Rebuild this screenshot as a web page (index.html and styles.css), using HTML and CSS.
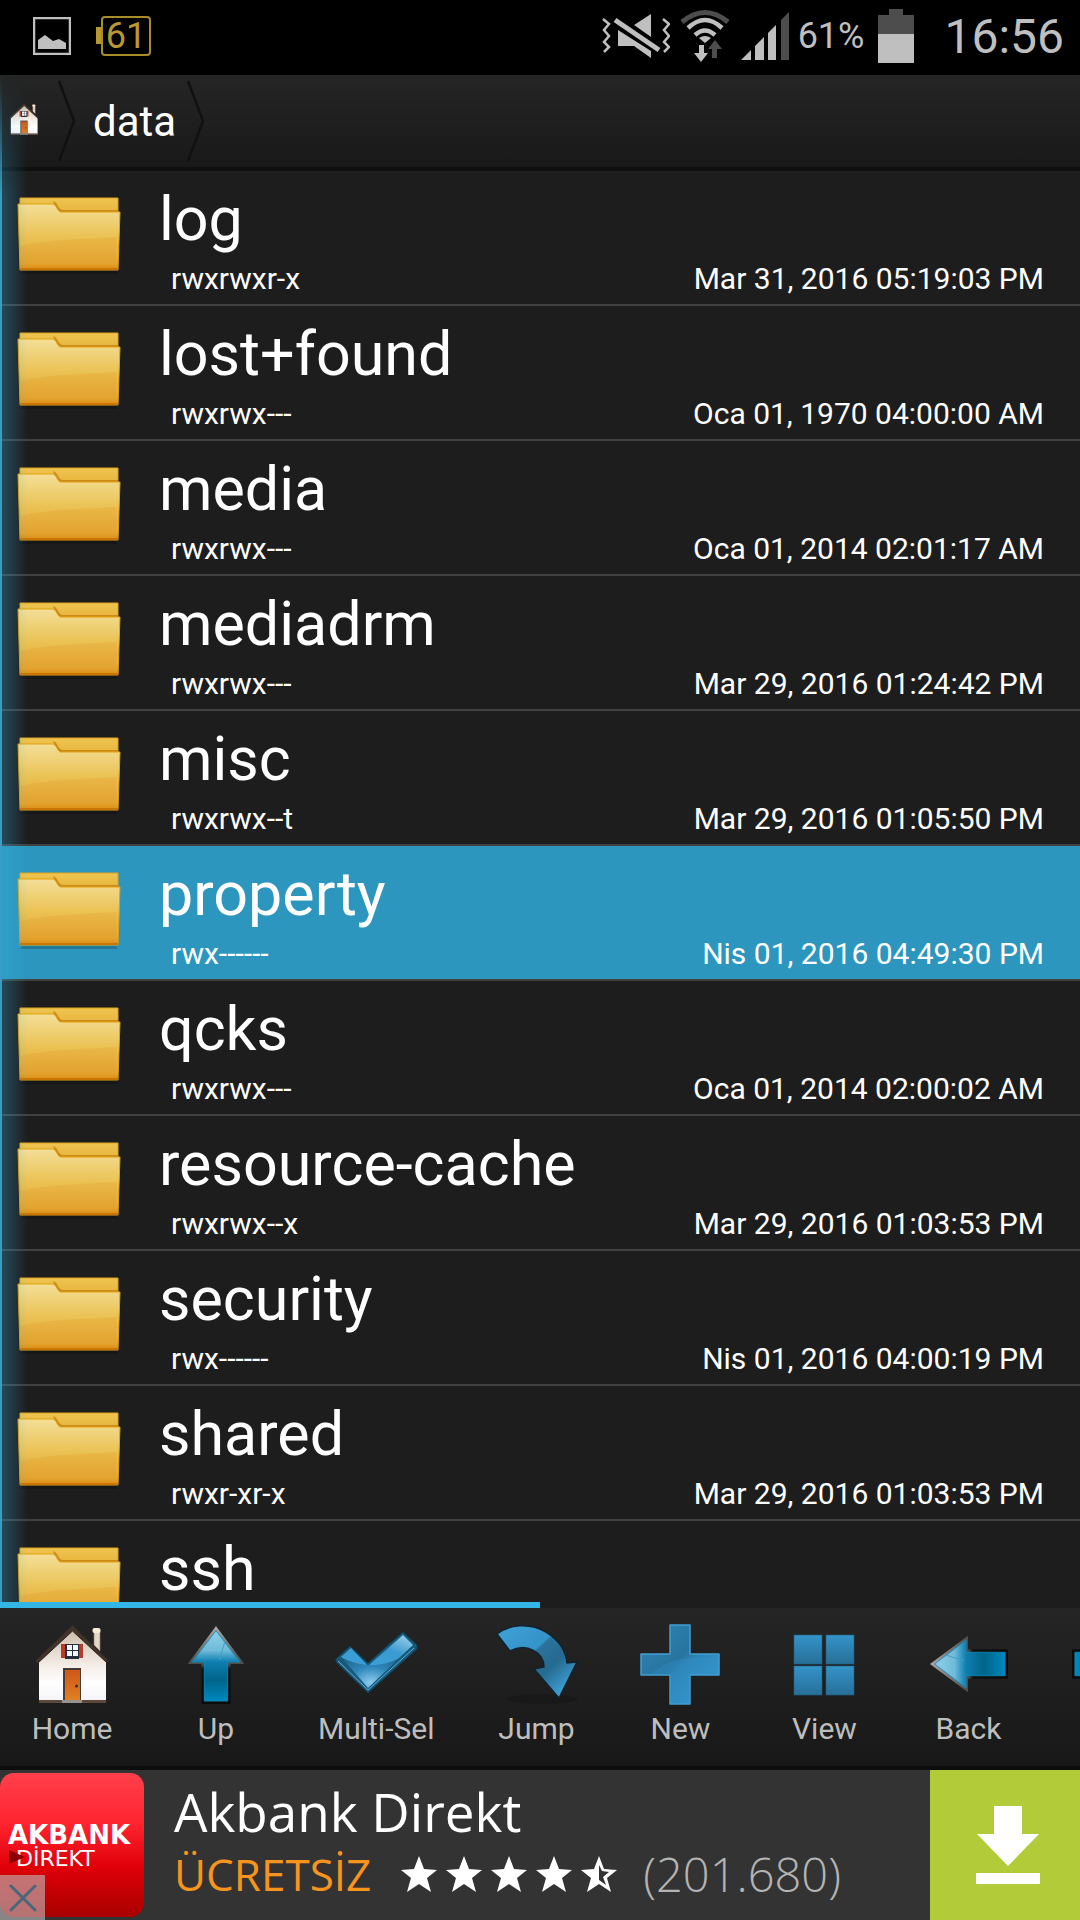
FILE: index.html
```html
<!DOCTYPE html>
<html lang="tr">
  <head>
    <meta charset="UTF-8" />
    <meta name="viewport" content="width=device-width, initial-scale=1.0" />
    <title>File Explorer - data</title>
    <link rel="stylesheet" href="styles.css">
  </head>
  <body>
    <!-- Shared icons -->
    <svg class="defs" width="0" height="0" aria-hidden="true">
      <defs>
        <linearGradient id="folder-front" x1="0" y1="0" x2="0" y2="1">
          <stop offset="0" stop-color="#f3df98" />
          <stop offset="0.5" stop-color="#ebc254" />
          <stop offset="0.9" stop-color="#e5a633" />
          <stop offset="1" stop-color="#d98a0c" />
        </linearGradient>
        <linearGradient id="folder-back" x1="0" y1="0" x2="0" y2="1">
          <stop offset="0" stop-color="#efc550" />
          <stop offset="1" stop-color="#d99a1c" />
        </linearGradient>
        <linearGradient id="wall" x1="0" y1="0" x2="0" y2="1">
          <stop offset="0" stop-color="#c9b8a4" />
          <stop offset="0.5" stop-color="#f3ece6" />
          <stop offset="0.75" stop-color="#ffffff" />
          <stop offset="1" stop-color="#f4f2f6" />
        </linearGradient>
        <linearGradient id="door" x1="0" y1="0" x2="0" y2="1">
          <stop offset="0" stop-color="#cf5718" />
          <stop offset="1" stop-color="#e07f24" />
        </linearGradient>
        <linearGradient id="rim" x1="0" y1="0" x2="0" y2="1">
          <stop offset="0" stop-color="#a8a8a8" />
          <stop offset="0.5" stop-color="#4a4a4a" />
          <stop offset="0.55" stop-color="#111111" />
          <stop offset="1" stop-color="#0c0c0c" />
        </linearGradient>
        <linearGradient id="arrow" x1="0" y1="0" x2="0" y2="1">
          <stop offset="0" stop-color="#8fd0e8" />
          <stop offset="0.28" stop-color="#6fbbd9" />
          <stop offset="0.44" stop-color="#0f7fb2" />
          <stop offset="0.7" stop-color="#006489" />
          <stop offset="1" stop-color="#0088c0" />
        </linearGradient>
        <linearGradient id="tile" x1="0" y1="0" x2="0" y2="1">
          <stop offset="0" stop-color="#3494c9" />
          <stop offset="1" stop-color="#276f98" />
        </linearGradient>
        <linearGradient id="plus" x1="0" y1="0" x2="1" y2="1">
          <stop offset="0" stop-color="#2f86b6" />
          <stop offset="0.45" stop-color="#28749f" />
          <stop offset="0.55" stop-color="#2d84b5" />
          <stop offset="1" stop-color="#3a9dd4" />
        </linearGradient>
        <linearGradient id="jump" x1="0" y1="0" x2="1" y2="1">
          <stop offset="0" stop-color="#3fa2d8" />
          <stop offset="0.4" stop-color="#3493c8" />
          <stop offset="0.42" stop-color="#2a739b" />
          <stop offset="0.62" stop-color="#256a90" />
          <stop offset="0.88" stop-color="#3fa2d8" />
        </linearGradient>
        <linearGradient id="check" x1="0" y1="1" x2="1" y2="0">
          <stop offset="0" stop-color="#3aa0d8" />
          <stop offset="0.6" stop-color="#3b9bd0" />
          <stop offset="1" stop-color="#a6d3ec" />
        </linearGradient>
        <radialGradient id="check-glow" cx="0.42" cy="0.9" r="0.6">
          <stop offset="0" stop-color="#8fcdf0" />
          <stop offset="0.5" stop-color="#2d86ba" />
          <stop offset="1" stop-color="#1e6288" />
        </radialGradient>
      </defs>
      <symbol id="icon-folder" viewBox="0 0 104 78">
        <path d="M5 74h94l2 3H3z" fill="#000" opacity="0.2" />
        <path d="M3 1h98v40H3z" fill="url(#folder-back)" stroke="#e0a21c" />
        <path d="M36 4c5 1 5 9 10 9h55v3H40z" fill="#bd7708" opacity="0.7" />
        <path d="M1 7h34c5 0 5 8 9 8h59l-2 58H3z" fill="url(#folder-front)" stroke="#e3a10f" />
        <path d="M3 49c30-7 66-7 97-9l-1 31H4z" fill="#dd9420" opacity="0.22" />
        <path d="M3 72h98" stroke="#cc7503" stroke-width="2" />
      </symbol>
      <symbol id="icon-home" viewBox="0 0 80 80">
        <path d="M62 7h6v20l-6-6z" fill="#e5d9c5" stroke="#8d7c69" stroke-width="0.7" />
        <rect x="60.500" y="4" width="8" height="5" rx="2" fill="#f7ecda" />
        <path d="M40 3l34 34v41H7V37z" fill="url(#wall)" />
        <path d="M7 76h67v3H7z" fill="#5b4a3c" />
        <path d="M3 37L40.500 1 77 37l-3 1L40.500 7 6 39z" fill="#40342a" stroke="#2e261f" />
        <path d="M29 20h22v14H29z" fill="#b63b2b" />
        <path d="M33 20h14v15H33z" fill="#25303c" />
        <path d="M35 21h5v5h-5zM41 21h5v5h-5zM35 27h5v5h-5zM41 27h5v5h-5z" fill="#f2f6fa" />
        <path d="M31 44h18v33H31z" fill="#443a36" />
        <path d="M33 46h15v30H33z" fill="url(#door)" />
        <path d="M30 76h20v3H30z" fill="#94938f" />
        <circle cx="44.500" cy="62" r="1.500" fill="#3b2b1c" />
      </symbol>
      <symbol id="icon-arrow" viewBox="0 0 80 82">
        <path d="M40 2l29 39H55v41H25V41H11z" fill="url(#rim)" />
        <path d="M40 7l24.500 32H52v40H28V39H15.500z" fill="url(#arrow)" stroke="#0b8fc4" stroke-width="0.8" />
        <path d="M49 19c-2 6-4 12-5 18" stroke="#3f9fc6" fill="none" />
      </symbol>
    </svg>

    <div class="app">
      <!-- Status bar -->
      <header class="status-bar">
        <svg class="status-picture" viewBox="0 0 38 38" width="38" height="38">
          <path d="M1 1h36v36H1z" fill="none" stroke="#bfbfbf" stroke-width="2.500" />
          <path d="M5 32v-9l7-5 8 6 6-2 7 4v6z" fill="#bfbfbf" />
        </svg>
        <span class="battery-badge">61</span>
        <div class="status-right">
          <svg viewBox="0 0 68 44" width="68" height="44">
            <path d="M1 5l6 5-5 6 5 6-5 6 5 5-5 5M61 5l6 5-5 6 5 6-5 6 5 5-5 5" fill="none" stroke="#bfbfbf" stroke-width="2.500" />
            <path d="M16 16v16h16l17 12V37zM32 11L49 0v23z" fill="#bfbfbf" />
            <path d="M12 3l47 33" stroke="#000000" stroke-width="9" />
            <path d="M13 6l44 30" stroke="#bfbfbf" stroke-width="5" />
          </svg>
          <svg class="wifi" viewBox="0 0 50 54" width="50" height="54">
            <path d="M2 13Q25-6 48 13" fill="none" stroke="#4d4d4d" stroke-width="5" />
            <path d="M8 19Q25 3 42 19M15 26Q25 17 35 26" fill="none" stroke="#bfbfbf" stroke-width="4.500" />
            <path d="M19 29q6-4 12 0l-6 5z" fill="#bfbfbf" />
            <path d="M19 36h5v8h4l-7 9-7-9h5z" fill="#bfbfbf" />
            <path d="M32 49h5v-9h5l-7-9-7 9h4z" fill="#4d4d4d" />
          </svg>
          <svg class="signal" viewBox="0 0 48 48" width="48" height="48">
            <path d="M0 48l10-10v10zM14 34l9-9v23h-9zM27 21l8-8v35h-8z" fill="#bfbfbf" />
            <path d="M40 8l8-8v48h-8z" fill="#4d4d4d" />
          </svg>
          <span class="battery-percent">61%</span>
          <svg class="battery" viewBox="0 0 36 54" width="36" height="54">
            <path d="M11 0h14v6h11v20H0V6h11z" fill="#4d4d4d" />
            <path d="M0 25h36v29H0z" fill="#bfbfbf" />
          </svg>
          <time class="clock">16:56</time>
        </div>
      </header>

      <div class="explorer">
        <!-- Path -->
        <nav class="breadcrumb" aria-label="Path">
          <a href="#" class="crumb-home" aria-label="Home">
            <svg width="32" height="32"><use href="#icon-home" /></svg>
          </a>
          <svg class="chevron" viewBox="0 0 18 82" width="18" height="82">
            <path d="M1 1l15 40L1 81" fill="none" stroke="#111111" stroke-width="2.500" />
          </svg>
          <a href="#" class="crumb">data</a>
          <svg class="chevron" viewBox="0 0 18 82" width="18" height="82">
            <path d="M1 1l15 40L1 81" fill="none" stroke="#111111" stroke-width="2.500" />
          </svg>
        </nav>

        <!-- Folders -->
        <ul class="file-list">
          <li>
            <a href="#" class="file">
              <svg class="folder"><use href="#icon-folder" /></svg>
              <span class="file-info">
                <span class="file-name">log</span>
                <span class="file-meta"><span>rwxrwxr-x</span><span>Mar 31, 2016 05:19:03 PM</span></span>
              </span>
            </a>
          </li>
          <li>
            <a href="#" class="file">
              <svg class="folder"><use href="#icon-folder" /></svg>
              <span class="file-info">
                <span class="file-name">lost+found</span>
                <span class="file-meta"><span>rwxrwx---</span><span>Oca 01, 1970 04:00:00 AM</span></span>
              </span>
            </a>
          </li>
          <li>
            <a href="#" class="file">
              <svg class="folder"><use href="#icon-folder" /></svg>
              <span class="file-info">
                <span class="file-name">media</span>
                <span class="file-meta"><span>rwxrwx---</span><span>Oca 01, 2014 02:01:17 AM</span></span>
              </span>
            </a>
          </li>
          <li>
            <a href="#" class="file">
              <svg class="folder"><use href="#icon-folder" /></svg>
              <span class="file-info">
                <span class="file-name">mediadrm</span>
                <span class="file-meta"><span>rwxrwx---</span><span>Mar 29, 2016 01:24:42 PM</span></span>
              </span>
            </a>
          </li>
          <li>
            <a href="#" class="file">
              <svg class="folder"><use href="#icon-folder" /></svg>
              <span class="file-info">
                <span class="file-name">misc</span>
                <span class="file-meta"><span>rwxrwx--t</span><span>Mar 29, 2016 01:05:50 PM</span></span>
              </span>
            </a>
          </li>
          <li>
            <a href="#" class="file selected">
              <svg class="folder"><use href="#icon-folder" /></svg>
              <span class="file-info">
                <span class="file-name">property</span>
                <span class="file-meta"><span>rwx------</span><span>Nis 01, 2016 04:49:30 PM</span></span>
              </span>
            </a>
          </li>
          <li>
            <a href="#" class="file">
              <svg class="folder"><use href="#icon-folder" /></svg>
              <span class="file-info">
                <span class="file-name">qcks</span>
                <span class="file-meta"><span>rwxrwx---</span><span>Oca 01, 2014 02:00:02 AM</span></span>
              </span>
            </a>
          </li>
          <li>
            <a href="#" class="file">
              <svg class="folder"><use href="#icon-folder" /></svg>
              <span class="file-info">
                <span class="file-name">resource-cache</span>
                <span class="file-meta"><span>rwxrwx--x</span><span>Mar 29, 2016 01:03:53 PM</span></span>
              </span>
            </a>
          </li>
          <li>
            <a href="#" class="file">
              <svg class="folder"><use href="#icon-folder" /></svg>
              <span class="file-info">
                <span class="file-name">security</span>
                <span class="file-meta"><span>rwx------</span><span>Nis 01, 2016 04:00:19 PM</span></span>
              </span>
            </a>
          </li>
          <li>
            <a href="#" class="file">
              <svg class="folder"><use href="#icon-folder" /></svg>
              <span class="file-info">
                <span class="file-name">shared</span>
                <span class="file-meta"><span>rwxr-xr-x</span><span>Mar 29, 2016 01:03:53 PM</span></span>
              </span>
            </a>
          </li>
          <li>
            <a href="#" class="file">
              <svg class="folder"><use href="#icon-folder" /></svg>
              <span class="file-info">
                <span class="file-name">ssh</span>
              </span>
            </a>
          </li>
        </ul>
        <div class="edge-glow"></div>
      </div>

      <div class="page-indicator"><div class="page-current"></div></div>

      <!-- Toolbar -->
      <div class="toolbar">
        <button class="tool">
          <svg class="tool-icon"><use href="#icon-home" /></svg>
          Home
        </button>
        <button class="tool">
          <svg class="tool-icon"><use href="#icon-arrow" /></svg>
          Up
        </button>
        <button class="tool">
          <svg class="tool-icon" viewBox="0 0 80 80">
            <path d="M0 35l14-13 18 17L67 8l14 13v4L32 69 0 38z" fill="#175777" stroke="#103c52" />
            <path d="M5 33l10-9 17 18L67 11l10 10-45 43z" fill="url(#check-glow)" />
            <path d="M5 33l10-9 17 18L67 11l10 10-14 13C47 44 22 43 5 33z" fill="url(#check)" />
            <path d="M2 37l30 29 46-42" fill="none" stroke="#5db1de" />
          </svg>
          Multi-Sel
        </button>
        <button class="tool">
          <svg class="tool-icon" viewBox="0 0 80 80">
            <ellipse cx="46" cy="75" rx="36" ry="5" fill="#000" opacity="0.15" />
            <path d="M1 10C12 1 33-2 50 8c13 8 20 19 21 31l10-1-18 36-25-29 10-2C48 29 31 18 14 27z" fill="url(#jump)" stroke="#10222c" stroke-width="1.500" />
          </svg>
          Jump
        </button>
        <button class="tool">
          <svg class="tool-icon" viewBox="0 0 80 80">
            <path d="M30 1h20v29h29v21H50v29H30V51H1V30h29z" fill="url(#plus)" stroke="#419fd2" stroke-width="1.500" stroke-linejoin="round" />
            <path d="M11 50C22 40 35 35 50 34l29-2v18H50v29H30V50z" fill="#3496cf" opacity="0.3" />
          </svg>
          New
        </button>
        <button class="tool">
          <svg class="tool-icon" viewBox="0 0 80 80">
            <g fill="url(#tile)" stroke="#23617f" stroke-width="0.6">
              <rect x="10" y="11" width="28" height="29" />
              <rect x="42" y="11" width="28" height="29" />
              <rect x="10" y="42" width="28" height="29" />
              <rect x="42" y="42" width="28" height="29" />
            </g>
          </svg>
          View
        </button>
        <button class="tool">
          <svg class="tool-icon arrow-left"><use href="#icon-arrow" /></svg>
          Back
        </button>
        <button class="tool" aria-label="Forward">
          <svg class="tool-icon arrow-right"><use href="#icon-arrow" /></svg>
        </button>
      </div>

      <!-- Ad banner -->
      <aside class="ad">
        <div class="ad-logo">
          <span class="ad-brand">AKBANK</span>
          <span class="ad-product">DİREKT</span>
          <svg class="ad-marker" viewBox="0 0 16 14" width="16" height="14"><path d="M0 0l16 7-16 7z" fill="#8c0006" /></svg>
        </div>
        <div class="ad-text">
          <a href="#" class="ad-title">Akbank Direkt</a>
          <div class="ad-details">
            <span class="ad-price">ÜCRETSİZ</span>
            <svg class="stars" viewBox="0 0 216 36" width="216" height="36" role="img" aria-label="4.5">
              <defs>
                <path id="star" d="M18 0l5 13 13 1-10 8 4 14-12-8-12 8 4-14L0 14l13-1z" />
              </defs>
              <g fill="#ffffff">
                <use href="#star" />
                <use href="#star" x="45" />
                <use href="#star" x="90" />
                <use href="#star" x="135" />
                <path d="M198 0l5 13 13 1-10 8 4 14-12-8-12 8 4-14-10-8 13-1zM198 9v15l7 5-3-8 6-5-7-1z" fill-rule="evenodd" />
              </g>
            </svg>
            <span class="ad-count">(201.680)</span>
          </div>
        </div>
        <button class="ad-download" aria-label="Download">
          <svg viewBox="0 0 64 78" width="64" height="78">
            <path d="M18 0h28v28h17L32 60 1 28h17zM0 67h64v11H0z" fill="#ffffff" />
          </svg>
        </button>
        <button class="ad-close" aria-label="Close">
          <svg viewBox="0 0 28 28" width="28" height="28">
            <path d="M2 2l24 24M26 2L2 26" stroke="#47687c" stroke-width="3" stroke-linecap="round" />
          </svg>
        </button>
      </aside>
    </div>
  </body>
</html>
```

FILE: styles.css
```css
* {
  box-sizing: border-box;
}

body {
  margin: 0;
  background-color: #1d1d1d;
  color: white;
  font-family: Roboto, sans-serif;
}

a {
  color: inherit;
  text-decoration: none;
}

button {
  border: none;
  padding: 0;
  background: none;
  color: inherit;
  font: inherit;
  cursor: pointer;
}

svg {
  display: block;
  flex-shrink: 0;
}

.defs {
  position: absolute;
}

.app {
  display: flex;
  flex-direction: column;
  height: 100vh;
}

/* Status bar */
.status-bar {
  display: flex;
  align-items: center;
  flex-shrink: 0;
  height: 75px;
  padding: 0 16px 3px 33px;
  background-color: black;
  color: #bfbfbf;
}

.battery-badge {
  position: relative;
  display: flex;
  align-items: center;
  justify-content: center;
  width: 50px;
  height: 40px;
  margin-left: 30px;
  border: 2px solid #a88c28;
  border-radius: 4px;
  color: #b8992e;
  font-size: 36px;
  line-height: 36px;
}

/* Battery tip, hangs outside the frame */
.battery-badge::before {
  content: "";
  position: absolute;
  left: -7px;
  top: 9px;
  width: 5px;
  height: 17px;
  background-color: #b8992e;
}

.status-right {
  display: flex;
  align-items: center;
  margin-left: auto;
}

.wifi {
  margin-left: 10px;
}

.signal {
  margin-left: 11px;
}

.battery-percent {
  margin-left: 9px;
  font-size: 36px;
}

.battery {
  margin-left: 14px;
}

.clock {
  margin-left: 30px;
  font-size: 48px;
}

/* Explorer */
.explorer {
  position: relative;
  display: flex;
  flex-direction: column;
  flex: 1;
  min-height: 0;
}

.breadcrumb {
  display: flex;
  align-items: center;
  flex-shrink: 0;
  height: 96px;
  padding: 0 8px;
  background: linear-gradient(#252525, #191919);
  border-bottom: 4px solid #101010;
}

.crumb-home {
  margin-bottom: 4px;
}

.chevron {
  margin-left: 18px;
}

.crumb {
  margin-left: 17px;
  font-size: 42px;
}

.crumb + .chevron {
  margin-left: 11px;
}

/* Left edge highlight over the list */
.edge-glow {
  position: absolute;
  top: 0;
  bottom: 0;
  left: 0;
  width: 28px;
  border-left: 2px solid #3a9cc4;
  background: linear-gradient(to right, rgba(51, 181, 229, 0.3), rgba(51, 181, 229, 0));
  mask-image: linear-gradient(transparent, black 120px);
  pointer-events: none;
}

/* File list */
.file-list {
  flex: 1;
  min-height: 0;
  margin: 0;
  padding: 0;
  overflow: hidden;
  list-style: none;
}

.file {
  display: flex;
  align-items: flex-start;
  min-height: 135px;
  padding: 8px 36px 5px 17px;
  border-bottom: 2px solid #404040;
}

.file.selected {
  background-color: #2d96be;
}

.folder {
  width: 104px;
  height: 78px;
  margin-top: 18px;
}

.file-info {
  flex: 1;
  margin-left: 38px;
}

.file-name {
  display: block;
  font-size: 61px;
  line-height: 80px;
}

.file-meta {
  display: flex;
  justify-content: space-between;
  padding-left: 12px;
  font-size: 30px;
  line-height: 40px;
}

/* Page indicator */
.page-indicator {
  flex-shrink: 0;
  height: 6px;
}

.page-current {
  width: 50%;
  height: 100%;
  background-color: #33b5e5;
}

/* Toolbar */
.toolbar {
  display: flex;
  align-items: flex-start;
  flex-shrink: 0;
  padding: 16px 0 19px;
  overflow: hidden;
  background: linear-gradient(#252525, #181818);
  border-bottom: 4px solid #0e0d0e;
}

.tool {
  display: flex;
  flex-direction: column;
  align-items: center;
  flex-shrink: 0;
  gap: 7px;
  min-width: 144px;
  padding: 0 30px;
  color: #bebebe;
  font-size: 30px;
  line-height: 36px;
}

.tool-icon {
  width: 80px;
  height: 80px;
  overflow: visible;
}

.arrow-left {
  transform: rotate(-90deg);
}

.arrow-right {
  transform: rotate(90deg);
}

/* Ad banner */
.ad {
  position: relative;
  display: flex;
  flex-shrink: 0;
  height: 150px;
  background-color: #333333;
  font-family: "Open Sans", sans-serif;
}

.ad-logo {
  position: relative;
  display: flex;
  flex-direction: column;
  align-self: center;
  width: 144px;
  height: 144px;
  padding: 50px 8px 0;
  border-radius: 14px;
  background: linear-gradient(#ff404c, #ff2430 35%, #e00008 65%, #a80000);
  font-family: "DejaVu Sans", sans-serif;
  line-height: 24px;
}

.ad-brand {
  font-size: 26px;
  font-weight: bold;
}

.ad-product {
  padding-left: 8px;
  font-size: 22px;
}

.ad-marker {
  position: absolute;
  left: 9px;
  top: 77px;
}

.ad-text {
  flex: 1;
  padding: 10px 0 0 30px;
}

.ad-title {
  display: block;
  font-size: 53px;
  line-height: 64px;
}

.ad-details {
  display: flex;
  align-items: center;
  font-size: 47px;
  line-height: 60px;
}

.ad-price {
  color: #f7941e;
  font-size: 44px;
}

.stars {
  margin-left: 30px;
}

.ad-count {
  margin-left: 26px;
  color: #b4b4b4;
  font-weight: 300;
}

.ad-download {
  display: flex;
  align-items: center;
  justify-content: center;
  width: 150px;
  padding-left: 6px;
  background-color: #b1cc38;
}

.ad-close {
  position: absolute;
  left: 0;
  bottom: 0;
  display: flex;
  align-items: center;
  justify-content: center;
  width: 45px;
  height: 45px;
  background-color: rgba(190, 190, 190, 0.6);
}
```
